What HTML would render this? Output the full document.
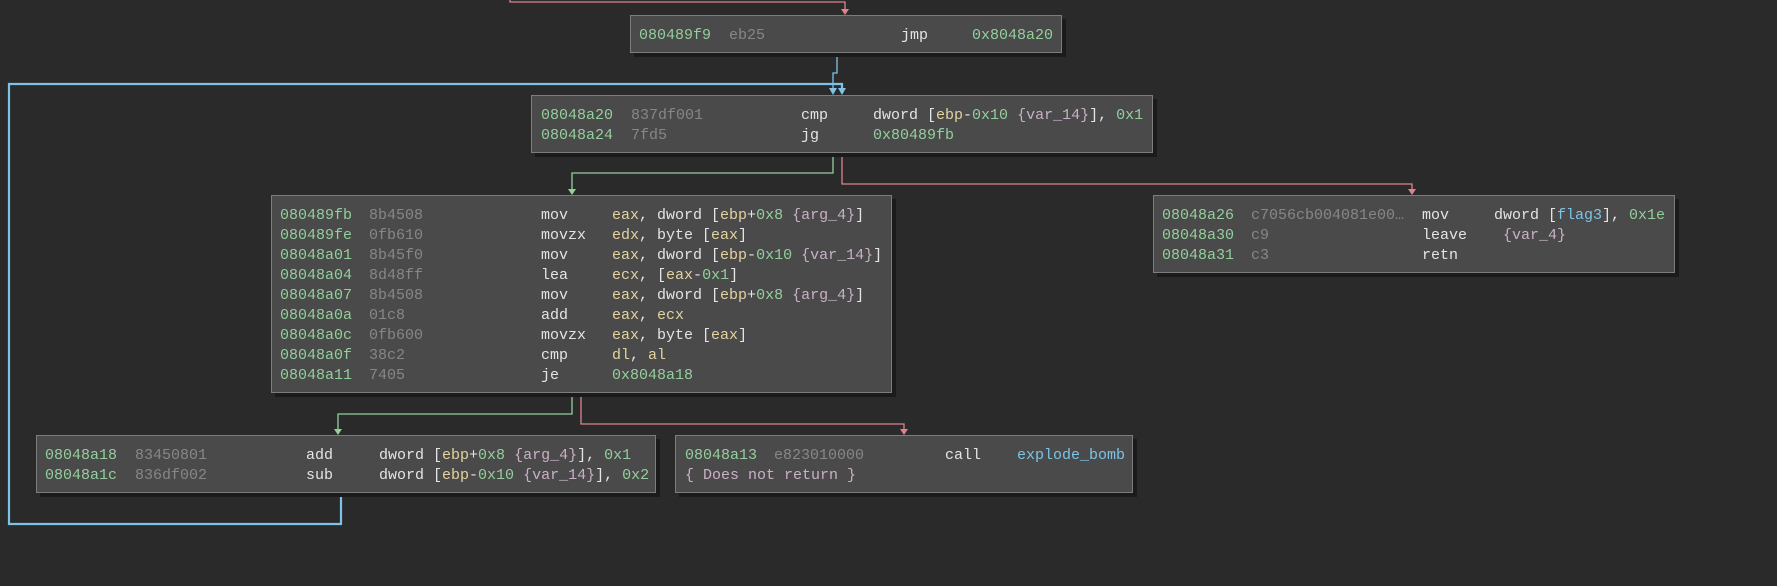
<!DOCTYPE html>
<html><head><meta charset="utf-8"><style>
body{margin:0;width:1777px;height:586px;background:#2a2a2a;overflow:hidden;position:relative;font-family:"Liberation Mono","DejaVu Sans Mono",monospace;font-size:15px;}
.b{position:absolute;background:#4a4a4a;border:1px solid #7d7d7d;box-shadow:4px 4px 0 #1b1b1b;box-sizing:border-box;}
.t{position:absolute;white-space:pre;line-height:20px;margin-top:2px;}
.a{color:#93cf9c}.y{color:#878787}.m{color:#e4e4e4}.r{color:#e3d3a0}.n{color:#93cf9c}.v{color:#c9b0c6}.s{color:#7cc3e6}.w{color:#e4e4e4}
svg{position:absolute;left:0;top:0}
</style></head><body>
<svg width="1777" height="586">
<g fill="none" stroke-width="1.3">
<polyline points="510,0 510,2 845,2 845,12" stroke="#e0828c"/>
<polyline points="837,53 837,73 833,73 833,92" stroke="#7cc3e6"/>
<polyline points="341,493 341,524 9,524 9,84 842,84 842,92" stroke="#7cc3e6" stroke-width="2.2"/>
<polyline points="833,153 833,173 572,173 572,192" stroke="#93cf9c"/>
<polyline points="842,153 842,184 1412,184 1412,192" stroke="#e0828c"/>
<polyline points="572,393 572,414 338,414 338,432" stroke="#93cf9c"/>
<polyline points="581,393 581,424 904,424 904,432" stroke="#e0828c"/>
</g>
<g>
<polygon points="841,9 849,9 845,15" fill="#e0828c"/>
<polygon points="829,88 837,88 833,95" fill="#7cc3e6"/>
<polygon points="838,88 846,88 842,95" fill="#7cc3e6"/>
<polygon points="568,189 576,189 572,195" fill="#93cf9c"/>
<polygon points="1408,189 1416,189 1412,195" fill="#e0828c"/>
<polygon points="334,429 342,429 338,435" fill="#93cf9c"/>
<polygon points="900,429 908,429 904,435" fill="#e0828c"/>
</g>
</svg>

<div class="b" style="left:630px;top:15px;width:432px;height:38px"></div>
<div class="t a" style="left:639px;top:24px">080489f9</div>
<div class="t y" style="left:729px;top:24px">eb25</div>
<div class="t m" style="left:901px;top:24px">jmp</div>
<div class="t n" style="left:972px;top:24px">0x8048a20</div>

<div class="b" style="left:531px;top:95px;width:622px;height:58px"></div>
<div class="t a" style="left:541px;top:104px">08048a20
08048a24</div>
<div class="t y" style="left:631px;top:104px">837df001
7fd5</div>
<div class="t m" style="left:801px;top:104px">cmp
jg</div>
<div class="t" style="left:873px;top:104px"><span class="w">dword [</span><span class="r">ebp</span><span class="w">-</span><span class="n">0x10</span> <span class="v">{var_14}</span><span class="w">], </span><span class="n">0x1</span>
<span class="n">0x80489fb</span></div>

<div class="b" style="left:271px;top:195px;width:621px;height:198px"></div>
<div class="t a" style="left:280px;top:204px">080489fb
080489fe
08048a01
08048a04
08048a07
08048a0a
08048a0c
08048a0f
08048a11</div>
<div class="t y" style="left:369px;top:204px">8b4508
0fb610
8b45f0
8d48ff
8b4508
01c8
0fb600
38c2
7405</div>
<div class="t m" style="left:541px;top:204px">mov
movzx
mov
lea
mov
add
movzx
cmp
je</div>
<div class="t w" style="left:612px;top:204px"><span class="r">eax</span>, dword [<span class="r">ebp</span>+<span class="n">0x8</span> <span class="v">{arg_4}</span>]
<span class="r">edx</span>, byte [<span class="r">eax</span>]
<span class="r">eax</span>, dword [<span class="r">ebp</span>-<span class="n">0x10</span> <span class="v">{var_14}</span>]
<span class="r">ecx</span>, [<span class="r">eax</span>-<span class="n">0x1</span>]
<span class="r">eax</span>, dword [<span class="r">ebp</span>+<span class="n">0x8</span> <span class="v">{arg_4}</span>]
<span class="r">eax</span>, <span class="r">ecx</span>
<span class="r">eax</span>, byte [<span class="r">eax</span>]
<span class="r">dl</span>, <span class="r">al</span>
<span class="n">0x8048a18</span></div>

<div class="b" style="left:1153px;top:195px;width:522px;height:78px"></div>
<div class="t a" style="left:1162px;top:204px">08048a26
08048a30
08048a31</div>
<div class="t y" style="left:1251px;top:204px">c7056cb004081e00…
c9
c3</div>
<div class="t m" style="left:1422px;top:204px">mov
leave
retn</div>
<div class="t w" style="left:1494px;top:204px">dword [<span class="s">flag3</span>], <span class="n">0x1e</span>
 <span class="v">{var_4}</span></div>

<div class="b" style="left:36px;top:435px;width:620px;height:58px"></div>
<div class="t a" style="left:45px;top:444px">08048a18
08048a1c</div>
<div class="t y" style="left:135px;top:444px">83450801
836df002</div>
<div class="t m" style="left:306px;top:444px">add
sub</div>
<div class="t w" style="left:379px;top:444px">dword [<span class="r">ebp</span>+<span class="n">0x8</span> <span class="v">{arg_4}</span>], <span class="n">0x1</span>
dword [<span class="r">ebp</span>-<span class="n">0x10</span> <span class="v">{var_14}</span>], <span class="n">0x2</span></div>

<div class="b" style="left:675px;top:435px;width:458px;height:58px"></div>
<div class="t a" style="left:685px;top:444px">08048a13</div>
<div class="t y" style="left:774px;top:444px">e823010000</div>
<div class="t m" style="left:945px;top:444px">call</div>
<div class="t s" style="left:1017px;top:444px">explode_bomb</div>
<div class="t v" style="left:685px;top:464px">{ Does not return }</div>
</body></html>
